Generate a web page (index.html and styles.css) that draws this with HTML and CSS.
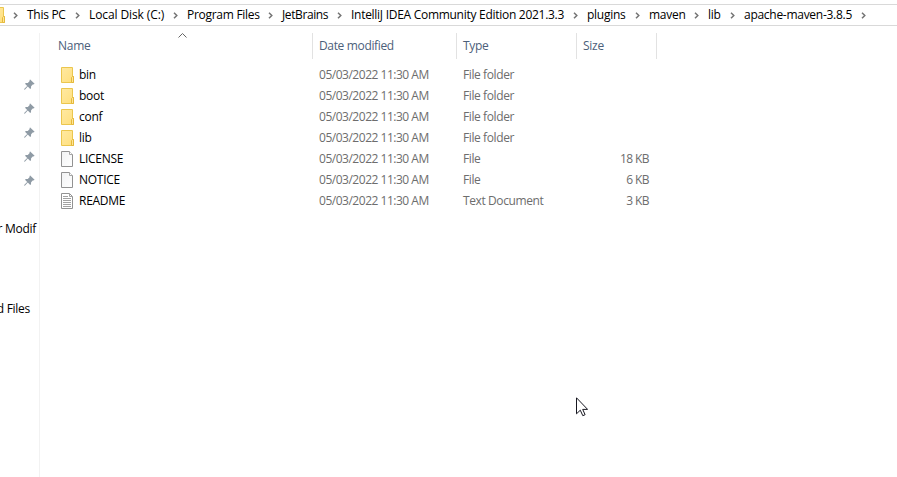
FILE: index.html
```html
<!DOCTYPE html>
<html lang="en">
<head>
<meta charset="utf-8">
<title>apache-maven-3.8.5</title>
<link rel="stylesheet" href="styles.css">
</head>
<body>
<svg class="defs" aria-hidden="true">
  <defs>
    <linearGradient id="gold" x1="0" y1="0" x2="1" y2="1"><stop offset="0" stop-color="#ffe9a2"/><stop offset="1" stop-color="#ffdf7c"/></linearGradient>
    <linearGradient id="paper" x1="0" y1="0" x2="1" y2="1"><stop offset="0" stop-color="#f1f2f3"/><stop offset="1" stop-color="#fff"/></linearGradient>
    <symbol id="folder" viewBox="0 0 13 16"><path d="M.5.5h11v9h1v6H.5z" fill="url(#gold)" stroke="#ebc64e"/><path d="M10.5 15.5v-5l1-1h1v6z" fill="#ffe596" stroke="#e5b93c"/></symbol>
    <symbol id="file" viewBox="0 0 12 16"><path d="M.5.5h8l3 3v12H.5z" fill="url(#paper)" stroke="#929292"/><path d="M8.5.5v3h3" fill="#fff" stroke="#a5a5a5"/></symbol>
    <symbol id="text" viewBox="0 0 12 16"><path d="M.5.5h8l3 3v12H.5z" fill="#fff" stroke="#929292"/><path d="M8.5.5v3h3M2 3.5h5M2 5.5h8M2 7.5h8M2 9.5h8M2 11.5h8M2 13.5h8" fill="none" stroke="#a2a2a2"/></symbol>
    <symbol id="pin" viewBox="0 0 11 11"><path d="M6.2.4 10.6 4.8 9.7 5.5 9 5.3 7.1 7.2 7 9.2 6.2 10 3.8 7.6.8 10.7.1 10.4.4 9.7 3.2 7 1 4.8 1.8 4 3.8 4 5.7 2 5.5 1.1z" fill="#8f9ba5"/></symbol>
    <symbol id="chev" viewBox="0 0 5 7"><path d="M1 .7 3.8 3.5 1 6.3" fill="none" stroke="#747474" stroke-width="1.5"/></symbol>
  </defs>
</svg>
<div class="window">
  <nav class="address">
    <svg class="chip"><use href="#folder"/></svg>
    <svg class="chev root"><use href="#chev"/></svg>
    <span class="crumb pc">This PC<svg class="chev"><use href="#chev"/></svg></span>
    <span class="crumb disk">Local Disk (C:)<svg class="chev"><use href="#chev"/></svg></span>
    <span class="crumb programs">Program Files<svg class="chev"><use href="#chev"/></svg></span>
    <span class="crumb jetbrains">JetBrains<svg class="chev"><use href="#chev"/></svg></span>
    <span class="crumb idea">IntelliJ IDEA Community Edition 2021.3.3<svg class="chev"><use href="#chev"/></svg></span>
    <span class="crumb plugins">plugins<svg class="chev"><use href="#chev"/></svg></span>
    <span class="crumb maven">maven<svg class="chev"><use href="#chev"/></svg></span>
    <span class="crumb lib">lib<svg class="chev"><use href="#chev"/></svg></span>
    <span class="crumb apache">apache-maven-3.8.5<svg class="chev"><use href="#chev"/></svg></span>
  </nav>
  <div class="body">
    <aside class="sidebar">
      <div class="pins">
        <svg class="pin"><use href="#pin"/></svg>
        <svg class="pin"><use href="#pin"/></svg>
        <svg class="pin"><use href="#pin"/></svg>
        <svg class="pin"><use href="#pin"/></svg>
        <svg class="pin"><use href="#pin"/></svg>
      </div>
      <div class="side modif"><span>r Modif</span></div>
      <div class="side files"><span>d Files</span></div>
    </aside>
    <main class="list">
      <div class="head">
        <div class="h-name"><span>Name</span><svg class="sort" viewBox="0 0 9 5"><path d="M.5 4.5l4-4 4 4" fill="none" stroke="#666"/></svg></div>
        <div><span class="t-mod">Date modified</span></div>
        <div><span>Type</span></div>
        <div><span>Size</span></div>
      </div>
      <div class="row"><svg class="folder"><use href="#folder"/></svg><span class="name">bin</span><span class="date">05/03/2022 11:30 AM</span><span class="type">File folder</span><span class="size"></span></div>
      <div class="row"><svg class="folder"><use href="#folder"/></svg><span class="name">boot</span><span class="date">05/03/2022 11:30 AM</span><span class="type">File folder</span><span class="size"></span></div>
      <div class="row"><svg class="folder"><use href="#folder"/></svg><span class="name">conf</span><span class="date">05/03/2022 11:30 AM</span><span class="type">File folder</span><span class="size"></span></div>
      <div class="row"><svg class="folder"><use href="#folder"/></svg><span class="name">lib</span><span class="date">05/03/2022 11:30 AM</span><span class="type">File folder</span><span class="size"></span></div>
      <div class="row"><svg class="file"><use href="#file"/></svg><span class="name">LICENSE</span><span class="date">05/03/2022 11:30 AM</span><span class="type">File</span><span class="size">18 KB</span></div>
      <div class="row"><svg class="file"><use href="#file"/></svg><span class="name">NOTICE</span><span class="date">05/03/2022 11:30 AM</span><span class="type">File</span><span class="size">6 KB</span></div>
      <div class="row"><svg class="file"><use href="#text"/></svg><span class="name">README</span><span class="date">05/03/2022 11:30 AM</span><span class="type">Text Document</span><span class="size">3 KB</span></div>
    </main>
  </div>
  <svg class="cursor" viewBox="0 0 12 20"><path d="M.5.8v16l3.8-3.6 2.5 5.5 2.3-1-2.4-5.3h4.9z" fill="#fff" stroke="#171720"/></svg>
</div>
</body>
</html>
```
FILE: styles.css
```css
* { box-sizing: border-box; }
body {
  margin: 0;
  background: #fff;
  color: #000;
  font: 12px/20px "Open Sans", "Noto Sans", sans-serif;
  letter-spacing: -0.28px;
}
svg { display: block; flex: none; }
.defs { position: absolute; width: 0; height: 0; }
.window { position: relative; width: 897px; height: 477px; overflow: hidden; display: flex; flex-direction: column; padding-top: 4px; }
.address {
  flex: none;
  height: 22px;
  border: solid #d9d9d9;
  border-width: 1px 0;
  display: flex;
  align-items: center;
  white-space: nowrap;
}
.chip { width: 13px; height: 16px; margin-left: -8px; }
.chev { width: 5px; height: 7px; }
.root { margin: 1px 9px 0 8px; }
.crumb { flex: none; display: flex; justify-content: space-between; align-items: center; margin-right: 9px; }
.crumb .chev { margin-top: 1px; }
.pc { width: 53px; }
.disk { width: 89px; letter-spacing: -0.1px; }
.programs { width: 86px; }
.jetbrains { width: 60px; letter-spacing: -0.4px; }
.idea { width: 227px; }
.plugins { width: 53px; }
.maven { width: 50px; }
.lib { width: 27px; }
.apache { width: 122px; }
.body { flex: 1; display: flex; padding-top: 7px; }
.sidebar { width: 40px; border-right: 1px solid #f2f2f2; overflow: hidden; }
.pins { padding: 46px 0 0 24px; display: grid; gap: 13px; }
.pin { width: 11px; height: 11px; }
.side { display: flex; justify-content: flex-end; white-space: nowrap; }
.modif { margin-top: 33px; padding-right: 3px; }
.files { margin-top: 60px; padding-right: 9px; }
.list { width: 617px; }
.head { display: grid; grid-template-columns: 273px 144px 120px 80px; height: 25px; margin-bottom: 6px; color: #4c607a; line-height: 26px; }
.head > div { border-right: 1px solid #e2e2e2; padding-left: 6px; }
.head .h-name { position: relative; padding-left: 18px; }
.t-mod { letter-spacing: -0.35px; }
.sort { position: absolute; left: 138px; top: 0; width: 9px; height: 5px; }
.row { height: 21px; display: grid; grid-template-columns: 18px 240px 144px 120px 66px; align-items: center; padding-left: 21px; color: #6d6d6d; white-space: nowrap; }
.row .name { color: #000; }
.date { letter-spacing: -0.48px; }
.type { letter-spacing: -0.4px; }
.folder { width: 13px; height: 16px; }
.file { width: 12px; height: 16px; }
.size { text-align: right; letter-spacing: -0.6px; }
.cursor { position: absolute; left: 576px; top: 397px; width: 12px; height: 20px; }
```
